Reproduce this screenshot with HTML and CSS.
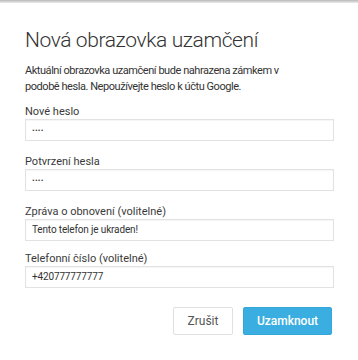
FILE: index.html
```html
<!DOCTYPE html>
<html lang="cs">
<head>
<meta charset="utf-8">
<title>Nová obrazovka uzamčení</title>
<link rel="stylesheet" href="styles.css">
</head>
<body>
<div class="topbar"></div>
<main class="dialog">
  <h1 class="title">Nová obrazovka uzamčení</h1>
  <p class="desc">Aktuální obrazovka uzamčení bude nahrazena zámkem v podobě hesla. Nepoužívejte heslo k účtu Google.</p>
  <div class="field">
    <div class="label">Nové heslo</div>
    <div class="input"><span class="dots">••••</span></div>
  </div>
  <div class="field">
    <div class="label">Potvrzení hesla</div>
    <div class="input"><span class="dots">••••</span></div>
  </div>
  <div class="field">
    <div class="label">Zpráva o obnovení (volitelné)</div>
    <div class="input">Tento telefon je ukraden!</div>
  </div>
  <div class="field field-last">
    <div class="label">Telefonní číslo (volitelné)</div>
    <div class="input">+420777777777</div>
  </div>
  <div class="actions">
    <button class="btn btn-cancel">Zrušit</button>
    <button class="btn btn-primary">Uzamknout</button>
  </div>
</main>
</body>
</html>
```
FILE: styles.css
```css
html, body {
  margin: 0;
  padding: 0;
  background: #fff;
}
body {
  font-family: Roboto, "Liberation Sans", sans-serif;
  color: #333;
}
.topbar {
  height: 3px;
  background: linear-gradient(#b8b8b8, #ececec);
}
.dialog {
  padding: 24px 24px 0 25px;
}
.title {
  margin: 0;
  font-size: 21px;
  line-height: 26px;
  font-weight: 300;
  letter-spacing: -0.4px;
  color: #333;
}
.desc {
  margin: 10px 0 0;
  max-width: 262px;
  font-size: 11px;
  line-height: 16px;
  letter-spacing: -0.45px;
  color: #333;
}
.field {
  margin-top: 9px;
}
.field + .field {
  margin-top: 13px;
}
.field-last.field {
  margin-top: 10px;
}
.label {
  font-size: 11px;
  line-height: 15px;
  color: #3a3a3a;
}
.input {
  box-sizing: border-box;
  height: 22px;
  border: 1px solid #e2e2e2;
  box-shadow: inset 0 1px 1px rgba(0,0,0,0.04);
  padding: 0 6px;
  font-size: 10px;
  line-height: 20px;
  letter-spacing: -0.15px;
  color: #333;
}
.dots {
  font-size: 8px;
  letter-spacing: 0.2px;
  color: #444;
}
.actions {
  display: flex;
  justify-content: flex-end;
  gap: 10px;
  margin-top: 19px;
  padding-right: 2px;
}
.btn {
  box-sizing: border-box;
  height: 28px;
  padding: 0;
  font-family: Roboto, "Liberation Sans", sans-serif;
  font-size: 12px;
  border-radius: 2px;
  cursor: pointer;
}
.btn-cancel {
  width: 60px;
  background: #fff;
  border: 1px solid #e0e0e0;
  color: #555;
}
.btn-primary {
  width: 89px;
  background: #3aaee0;
  border: 1px solid #35a6d8;
  color: #fff;
  font-weight: 500;
}
```
